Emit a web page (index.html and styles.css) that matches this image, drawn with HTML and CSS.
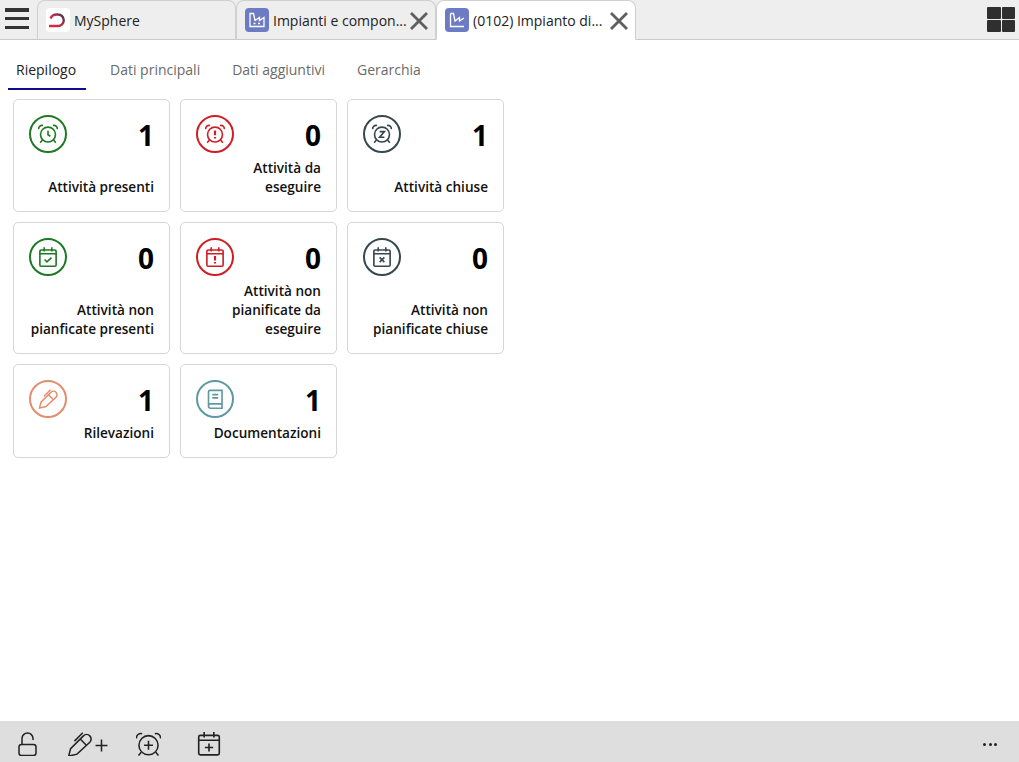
FILE: index.html
```html
<!DOCTYPE html>
<html lang="it">
<head>
<meta charset="utf-8">
<title>MySphere</title>
<link rel="stylesheet" href="styles.css">
</head>
<body>
<svg class="defs" width="0" height="0" aria-hidden="true">
  <defs>
    <linearGradient id="logo-grad" x1="0" y1="0.8" x2="1" y2="0.2">
      <stop offset="0" stop-color="#d8283a"/>
      <stop offset="0.55" stop-color="#b5324a"/>
      <stop offset="1" stop-color="#4f3550"/>
    </linearGradient>
    <g id="alarm">
      <circle cx="12" cy="12.500" r="6.900"/>
      <path d="M3.400 7.600a3.100 3.100 0 0 1 4-3.400M20.600 7.600a3.100 3.100 0 0 0-4-3.400M6.800 17.600 4.800 20M17.200 17.600l2 2.400"/>
    </g>
    <g id="cal">
      <rect x="4.500" y="5.500" width="15" height="15" rx="1.200"/>
      <path d="M4.500 9h15M8.500 3v4M15.500 3v4"/>
    </g>
    <g id="pen">
      <path d="M3.500 21 5 15.200 15 5.200a3.500 3.500 0 0 1 5 5L10 19.500Z"/>
      <path d="M12.500 7.700l4.800 4.800M14.500 2.800 8 9.300"/>
    </g>
  </defs>
</svg>
<div class="app">
  <header class="tabbar">
    <button class="menu" aria-label="Menu"><span></span><span></span><span></span></button>
    <div class="doc-tab home">
      <span class="logo">
        <svg viewBox="0 0 24 24" width="24" height="24"><path d="M4.500 10.500A7 6 0 0 1 12 6.500a5.700 5.700 0 0 1 0 11.500H3" fill="none" stroke="url(#logo-grad)" stroke-width="2.400"/></svg>
      </span>
      <span class="doc-title">MySphere</span>
    </div>
    <div class="doc-tab">
      <span class="tab-ico">
        <svg viewBox="0 0 24 24" width="24" height="24" fill="none" stroke="#fff" stroke-width="1.300"><path d="M5 5.500V18.500H19V9.500L14.500 12.500V9.500L10 12.500 8.500 5.500Z"/><path d="M8.500 15.500h2M13 15.500h2"/></svg>
      </span>
      <span class="doc-title">Impianti e compon...</span>
      <svg class="close" viewBox="0 0 20 20" width="20" height="20"><path d="M2 2 18 18M18 2 2 18"/></svg>
    </div>
    <div class="doc-tab active">
      <span class="tab-ico">
        <svg viewBox="0 0 24 24" width="24" height="24" fill="none" stroke="#fff" stroke-width="1.300"><path d="M5.500 5.500V18.500H19M5.500 5.500H8.500L10 13 14.500 9.500V13L19 10"/></svg>
      </span>
      <span class="doc-title">(0102) Impianto di...</span>
      <svg class="close" viewBox="0 0 20 20" width="20" height="20"><path d="M2 2 18 18M18 2 2 18"/></svg>
    </div>
    <div class="layout-btn"><i></i><i></i><i></i><i></i></div>
  </header>

  <nav class="subtabs">
    <a class="subtab current">Riepilogo</a>
    <a class="subtab">Dati principali</a>
    <a class="subtab">Dati aggiuntivi</a>
    <a class="subtab">Gerarchia</a>
  </nav>

  <main class="cards">
    <article class="card">
      <div class="card-top">
        <span class="ring green"><svg viewBox="0 0 24 24" width="26" height="26"><use href="#alarm"/><path d="M12 9v3.700l2.200 1.400"/></svg></span>
        <span class="count">1</span>
      </div>
      <div class="label">Attività presenti</div>
    </article>
    <article class="card">
      <div class="card-top">
        <span class="ring red"><svg viewBox="0 0 24 24" width="26" height="26"><use href="#alarm"/><path class="thick" d="M12 8.800v4.400M12 14.800v1.300"/></svg></span>
        <span class="count">0</span>
      </div>
      <div class="label">Attività da<br>eseguire</div>
    </article>
    <article class="card">
      <div class="card-top">
        <span class="ring slate"><svg viewBox="0 0 24 24" width="26" height="26"><use href="#alarm"/><path d="M9.800 9.800h4.400l-4.400 5.200h4.400"/></svg></span>
        <span class="count">1</span>
      </div>
      <div class="label">Attività chiuse</div>
    </article>
    <article class="card">
      <div class="card-top">
        <span class="ring green"><svg viewBox="0 0 24 24" width="26" height="26"><use href="#cal"/><path d="M8.800 14.300l2.200 2.200 4.200-4"/></svg></span>
        <span class="count">0</span>
      </div>
      <div class="label">Attività non<br>pianficate presenti</div>
    </article>
    <article class="card">
      <div class="card-top">
        <span class="ring red"><svg viewBox="0 0 24 24" width="26" height="26"><use href="#cal"/><path class="thick" d="M12 11v4.200M12 16.600v1.400"/></svg></span>
        <span class="count">0</span>
      </div>
      <div class="label">Attività non<br>pianificate da<br>eseguire</div>
    </article>
    <article class="card">
      <div class="card-top">
        <span class="ring slate"><svg viewBox="0 0 24 24" width="26" height="26"><use href="#cal"/><path d="M9.800 12.300l4.400 4.400M14.200 12.300l-4.400 4.400"/></svg></span>
        <span class="count">0</span>
      </div>
      <div class="label">Attività non<br>pianificate chiuse</div>
    </article>
    <article class="card">
      <div class="card-top">
        <span class="ring orange"><svg viewBox="0 0 24 24" width="24" height="24"><use href="#pen"/></svg></span>
        <span class="count">1</span>
      </div>
      <div class="label">Rilevazioni</div>
    </article>
    <article class="card">
      <div class="card-top">
        <span class="ring teal"><svg viewBox="0 0 24 24" width="26" height="26"><path d="M6 18.500V5.500A1.500 1.500 0 0 1 7.500 4H18.500V20.500H8a2 2 0 0 1-2-2 2 2 0 0 1 2-2H18.500"/><path d="M9.500 8h5.500M9.500 11h5.500"/></svg></span>
        <span class="count">1</span>
      </div>
      <div class="label">Documentazioni</div>
    </article>
  </main>

  <footer class="toolbar">
    <svg class="tool lock" viewBox="0 0 20 24" width="20" height="24"><path d="M4 12.500V6.500a5.500 5.500 0 0 1 11 0V8"/><rect x="1" y="12.500" width="17" height="11" rx="2.500"/></svg>
    <svg class="tool pen-add" viewBox="0 0 40 24" width="40" height="24"><g class="pen-big" transform="translate(-3.800 -2.800) scale(1.280)"><use href="#pen"/></g><path d="M27.500 13.500h12M33.500 7.500v12"/></svg>
    <svg class="tool alarm-add" viewBox="3 3 18 18" width="25" height="25"><g class="alarm-big"><use href="#alarm"/><path d="M12 9.300v6.400M8.800 12.500h6.400"/></g></svg>
    <svg class="tool cal-add" viewBox="0 0 24 24" width="26" height="26"><rect x="2.500" y="4" width="19" height="18" rx="1.500"/><path d="M2.500 8.500h19M7.500 1v5M16.500 1v5M12 11.500v7.500M8.200 15.200h7.600"/></svg>
    <div class="more"><i></i><i></i><i></i></div>
  </footer>
</div>
</body>
</html>
```
FILE: styles.css
```css
* { box-sizing: border-box; }
html, body { margin: 0; height: 100%; }
body { font-family: "Open Sans", "Noto Sans", "Liberation Sans", sans-serif; background: #fff; color: #111; overflow: hidden; }
.defs { display: block; height: 0; }
.app { height: 762px; display: flex; flex-direction: column; }

.tabbar { height: 40px; flex: none; display: flex; align-items: stretch; background: #eeeeee; border-bottom: 1px solid #c9c9c9; }
.menu { width: 37px; flex: none; padding: 8px 8px 10px 5px; border: 0; background: none; display: flex; flex-direction: column; justify-content: space-between; }
.menu span { display: block; height: 3.500px; width: 24px; background: #333; }
.doc-tab { width: 200px; flex: none; height: 40px; display: flex; align-items: center; padding: 0 6px 0 8px; background: #eeeeee; border: 1px solid #d0d0d0; border-bottom: 1px solid #c9c9c9; border-radius: 8px 8px 0 0; }
.doc-tab.home { width: 199px; }
.doc-tab.active { background: #fff; border-bottom-color: #fff; }
.logo, .tab-ico { width: 24px; height: 24px; flex: none; border-radius: 4px; display: block; margin-right: 4px; }
.logo { background: #fff; }
.tab-ico { background: #6d7bc4; }
.logo svg, .tab-ico svg { display: block; }
.doc-title { font-size: 14px; color: #222; white-space: nowrap; flex: none; }
.close { flex: none; margin-left: auto; fill: none; stroke: #5f5f5f; stroke-width: 2.800; margin-top: 2px; }
.layout-btn { margin-left: auto; margin-top: 7px; margin-right: 4px; width: 28px; height: 25px; display: grid; grid-template-columns: 1fr 1fr; gap: 1px; }
.layout-btn i { background: #2f2f2f; border-radius: 1px; }

.subtabs { flex: none; height: 50px; padding: 10px 0 0 8px; display: flex; gap: 16px; }
.subtab { font-size: 14px; line-height: 19px; padding: 10px 8px 9px; color: #6a6a6a; height: 40px; }
.subtab.current { color: #222; border-bottom: 2px solid #0e0e8c; min-width: 78px; }

.cards { flex: 1; padding: 9px 0 0 13px; display: grid; grid-template-columns: repeat(3, 157px); gap: 10px; align-content: start; }
.card { border: 1px solid #d6d6d6; border-radius: 5px; padding: 15px; display: flex; flex-direction: column; justify-content: space-between; }
.card-top { display: flex; justify-content: space-between; align-items: flex-start; height: 38px; margin-bottom: 5px; }
.ring { width: 38px; height: 38px; border: 2px solid currentColor; border-radius: 50%; display: flex; align-items: center; justify-content: center; }
.ring svg { fill: none; stroke: currentColor; stroke-width: 1.500; }
.thick { stroke-width: 2; }
.green { color: #1f7a24; }
.red { color: #cf1f25; }
.slate { color: #37474f; }
.orange { color: #e38d6e; }
.teal { color: #5f9aa3; }
.count { font-size: 28px; font-weight: 700; line-height: 38px; padding-top: 1px; color: #000; }
.label { font-size: 13.600px; font-weight: 600; line-height: 19px; text-align: right; color: #111; }

.toolbar { height: 41px; flex: none; background: #dedede; display: flex; align-items: center; padding: 0 22px 0 18px; }
.tool { fill: none; stroke: #222; stroke-width: 1.500; flex: none; margin-top: 5px; }
.pen-big { stroke-width: 1.200; }
.alarm-big { stroke-width: 1.100; }
.pen-add { margin-left: 30px; }
.alarm-add { margin-left: 28px; }
.cal-add { margin-left: 35px; }
.more { margin-left: auto; margin-top: 5px; display: flex; gap: 2.500px; }
.more i { width: 3px; height: 3px; border-radius: 50%; background: #222; }
```
